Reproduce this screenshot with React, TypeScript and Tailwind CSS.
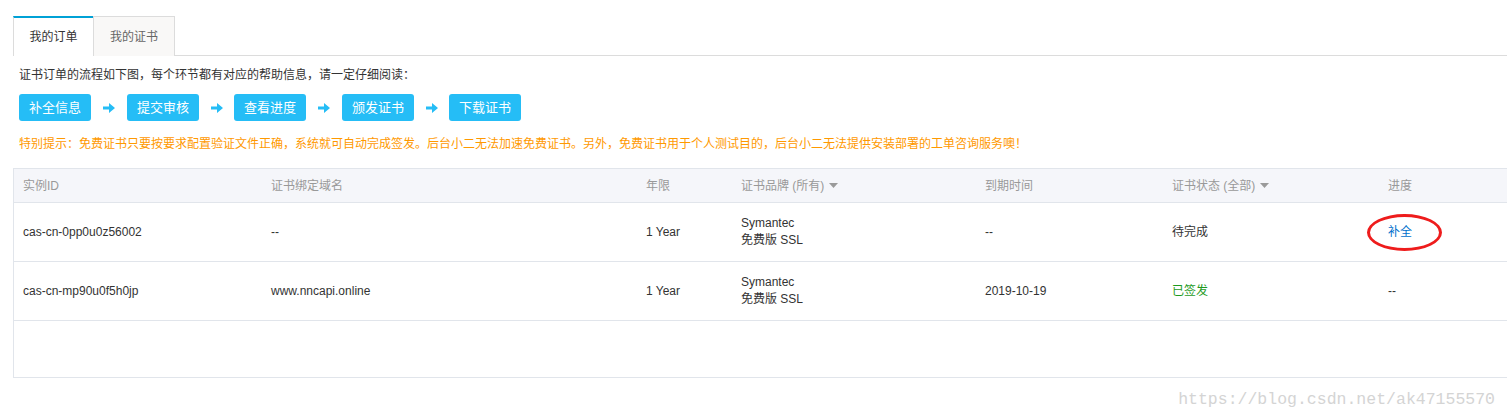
import React from "react";

const font = {
  fontFamily: '"Liberation Sans", "Noto Sans CJK SC", sans-serif',
};

const steps = ["补全信息", "提交审核", "查看进度", "颁发证书", "下载证书"];

const Arrow = ({ narrow }: { narrow?: boolean }) => (
  <svg
    width="12"
    height="10"
    viewBox="0 0 12 10"
    className={narrow ? "ml-[12px] mr-[11px]" : "mx-[12px]"}
  >
    <path d="M0 3.5h6V0l6 5-6 5V6.5H0z" fill="#25bdf6" />
  </svg>
);

const Caret = () => (
  <svg width="9" height="5" viewBox="0 0 9 5" className="ml-[5px] inline-block">
    <path d="M0 0h9L4.5 5z" fill="#9a9a9a" />
  </svg>
);

const cols = [
  "w-[248px]",
  "w-[375px]",
  "w-[95px]",
  "w-[244px]",
  "w-[187px]",
  "w-[216px]",
  "flex-1",
];

const App = () => {
  return (
    <div className="w-[1507px] h-[419px] bg-white overflow-hidden" style={font}>
      <div className="pt-4 pl-[13px]">
        {/* tabs */}
        <div className="flex border-b border-[#dcdcdc] h-[40px]">
          <div className="w-[80px] h-[40px] border-t-2 border-t-[#00a1d6] border-l border-[#dcdcdc] bg-white text-[12px] text-[#333] flex items-center justify-center">
            我的订单
          </div>
          <div className="w-[82px] h-[40px] border border-b-0 border-[#dcdcdc] bg-[#f9f8f7] text-[12px] text-[#666] flex items-center justify-center">
            我的证书
          </div>
        </div>

        <div className="pl-[6px]">
          <div className="mt-[11px] text-[12px] leading-[17px] text-[#333]">
            证书订单的流程如下图，每个环节都有对应的帮助信息，请一定仔细阅读：
          </div>
          <div className="mt-[10px] flex items-center">
            {steps.map((s, i) => (
              <React.Fragment key={s}>
                {i > 0 && <Arrow narrow={i % 2 === 0} />}
                <div className="w-[72px] h-[27px] rounded-[3px] bg-[#25bdf6] text-white text-[13px] flex items-center justify-center">
                  {s}
                </div>
              </React.Fragment>
            ))}
          </div>
          <div className="mt-[15px] text-[12px] leading-[17px] text-[#ff9900]">
            特别提示：免费证书只要按要求配置验证文件正确，系统就可自动完成签发。后台小二无法加速免费证书。另外，免费证书用于个人测试目的，后台小二无法提供安装部署的工单咨询服务噢！
          </div>
        </div>

        {/* table */}
        <div className="mt-[15px] border-l border-b border-t border-[#e1e5eb] h-[210px] text-[12px]">
          <div className="flex h-[34px] bg-[#f5f6fa] border-b border-[#e1e5eb] text-[#999] items-center">
            <div className={`${cols[0]} pl-[9px]`}>实例ID</div>
            <div className={`${cols[1]} pl-[9px]`}>证书绑定域名</div>
            <div className={`${cols[2]} pl-[9px]`}>年限</div>
            <div className={`${cols[3]} pl-[9px] flex items-center`}>
              证书品牌 (所有)
              <Caret />
            </div>
            <div className={`${cols[4]} pl-[9px]`}>到期时间</div>
            <div className={`${cols[5]} pl-[9px] flex items-center`}>
              证书状态 (全部)
              <Caret />
            </div>
            <div className={`${cols[6]} pl-[9px]`}>进度</div>
          </div>

          <div className="flex h-[59px] border-b border-[#e1e5eb] text-[#333] items-center">
            <div className={`${cols[0]} pl-[9px]`}>cas-cn-0pp0u0z56002</div>
            <div className={`${cols[1]} pl-[9px]`}>--</div>
            <div className={`${cols[2]} pl-[9px]`}>1 Year</div>
            <div className={`${cols[3]} pl-[9px] leading-[17px]`}>
              <div>Symantec</div>
              <div>免费版 SSL</div>
            </div>
            <div className={`${cols[4]} pl-[9px]`}>--</div>
            <div className={`${cols[5]} pl-[9px]`}>待完成</div>
            <div className={`${cols[6]} pl-[9px]`}>
              <span className="relative inline-block leading-[17px] text-[#0070cc]">
                补全
                <span className="absolute -left-[21px] -top-[10px] w-[75px] h-[37px] rounded-[50%] border-[3px] border-[#ee1c1c]" />
              </span>
            </div>
          </div>

          <div className="flex h-[59px] border-b border-[#e1e5eb] text-[#333] items-center">
            <div className={`${cols[0]} pl-[9px]`}>cas-cn-mp90u0f5h0jp</div>
            <div className={`${cols[1]} pl-[9px]`}>www.nncapi.online</div>
            <div className={`${cols[2]} pl-[9px]`}>1 Year</div>
            <div className={`${cols[3]} pl-[9px] leading-[17px]`}>
              <div>Symantec</div>
              <div>免费版 SSL</div>
            </div>
            <div className={`${cols[4]} pl-[9px]`}>2019-10-19</div>
            <div className={`${cols[5]} pl-[9px] text-[#1e9a1e]`}>已签发</div>
            <div className={`${cols[6]} pl-[9px]`}>--</div>
          </div>
        </div>

        <div className="flex justify-end pr-[12px] mt-[10px]">
          <span
            className="text-[16.5px] text-[#d4d4d4]"
            style={{ fontFamily: '"Liberation Mono", monospace' }}
          >
            https://blog.csdn.net/ak47155570
          </span>
        </div>
      </div>
    </div>
  );
};

export default App;
